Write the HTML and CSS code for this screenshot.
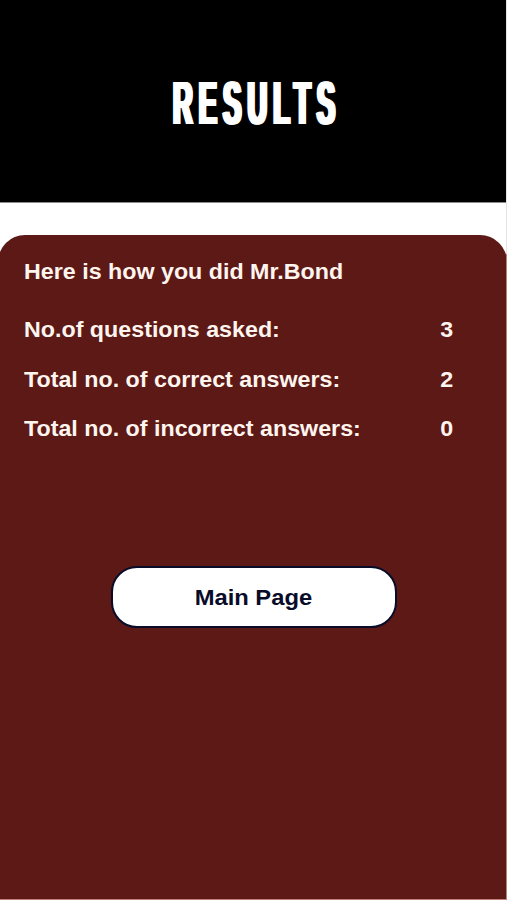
FILE: index.html
```html
<!DOCTYPE html>
<html lang="en">
<head>
<meta charset="utf-8">
<title>Results</title>
<link rel="stylesheet" href="styles.css">
</head>
<body>
<div class="screen">
  <header class="header"><h1 class="title">RESULTS</h1></header>
  <main class="panel">
    <p class="greeting"><span class="wide">Here is how you did Mr.Bond</span></p>
    <dl class="scores">
      <div class="row"><dt class="wide">No.of questions asked:</dt><dd class="wide value">3</dd></div>
      <div class="row"><dt class="wide">Total no. of correct answers:</dt><dd class="wide value">2</dd></div>
      <div class="row"><dt class="wide">Total no. of incorrect answers:</dt><dd class="wide value">0</dd></div>
    </dl>
    <button class="button" type="button"><span class="label">Main Page</span></button>
  </main>
</div>
</body>
</html>
```
FILE: styles.css
```css
* { box-sizing: border-box; }
body { margin: 0; background: #fff; font-family: "Liberation Sans", Arial, sans-serif; }
.screen {
  display: flex;
  flex-direction: column;
  gap: 32px;
  height: 900px;
  overflow: hidden;
  border-right: 1px solid;
  border-bottom: 1px solid #c08078;
  border-image: linear-gradient(#e4e4e4 255px, #c08078 255px) 1;
  background: #fff;
}
.header {
  display: flex;
  flex: 0 0 203px;
  align-items: center;
  justify-content: center;
  border-bottom: 1px solid #8a8a8a;
  background: #000;
}
.title {
  margin: 3px -8px 0 0;
  color: #fff;
  font-size: 61px;
  line-height: 70px;
  letter-spacing: 14px;
  text-shadow: 2px 0 #fff, -2px 0 #fff, 4px 0 #fff, -4px 0 #fff;
  transform: scaleX(.445);
}
.panel {
  display: flex;
  flex: 1;
  flex-direction: column;
  margin: 0 -1px 0 -2px;
  padding: 24px 53.5px 0 26px;
  border-radius: 27px 27px 0 0;
  background: #5d1916;
  color: #fff5ef;
  font-size: 22px;
  font-weight: bold;
  line-height: 26px;
}
.greeting { margin: 0 0 32px; }
.scores { display: flex; flex-direction: column; gap: 23.5px; margin: 0; }
.row { display: flex; justify-content: space-between; }
.wide { display: inline-block; margin: 0; transform: scaleX(1.057); transform-origin: left; white-space: nowrap; }
.value { transform-origin: right; }
.button {
  width: 286px;
  height: 62px;
  margin: 123.5px 0 0 86.5px;
  padding: 3px 0 0;
  border: 2px solid #080c29;
  border-radius: 26px;
  background: #fff;
  color: #080c29;
  font: bold 22px "Liberation Sans", Arial, sans-serif;
}
.label { display: inline-block; transform: scaleX(1.08); }
```
